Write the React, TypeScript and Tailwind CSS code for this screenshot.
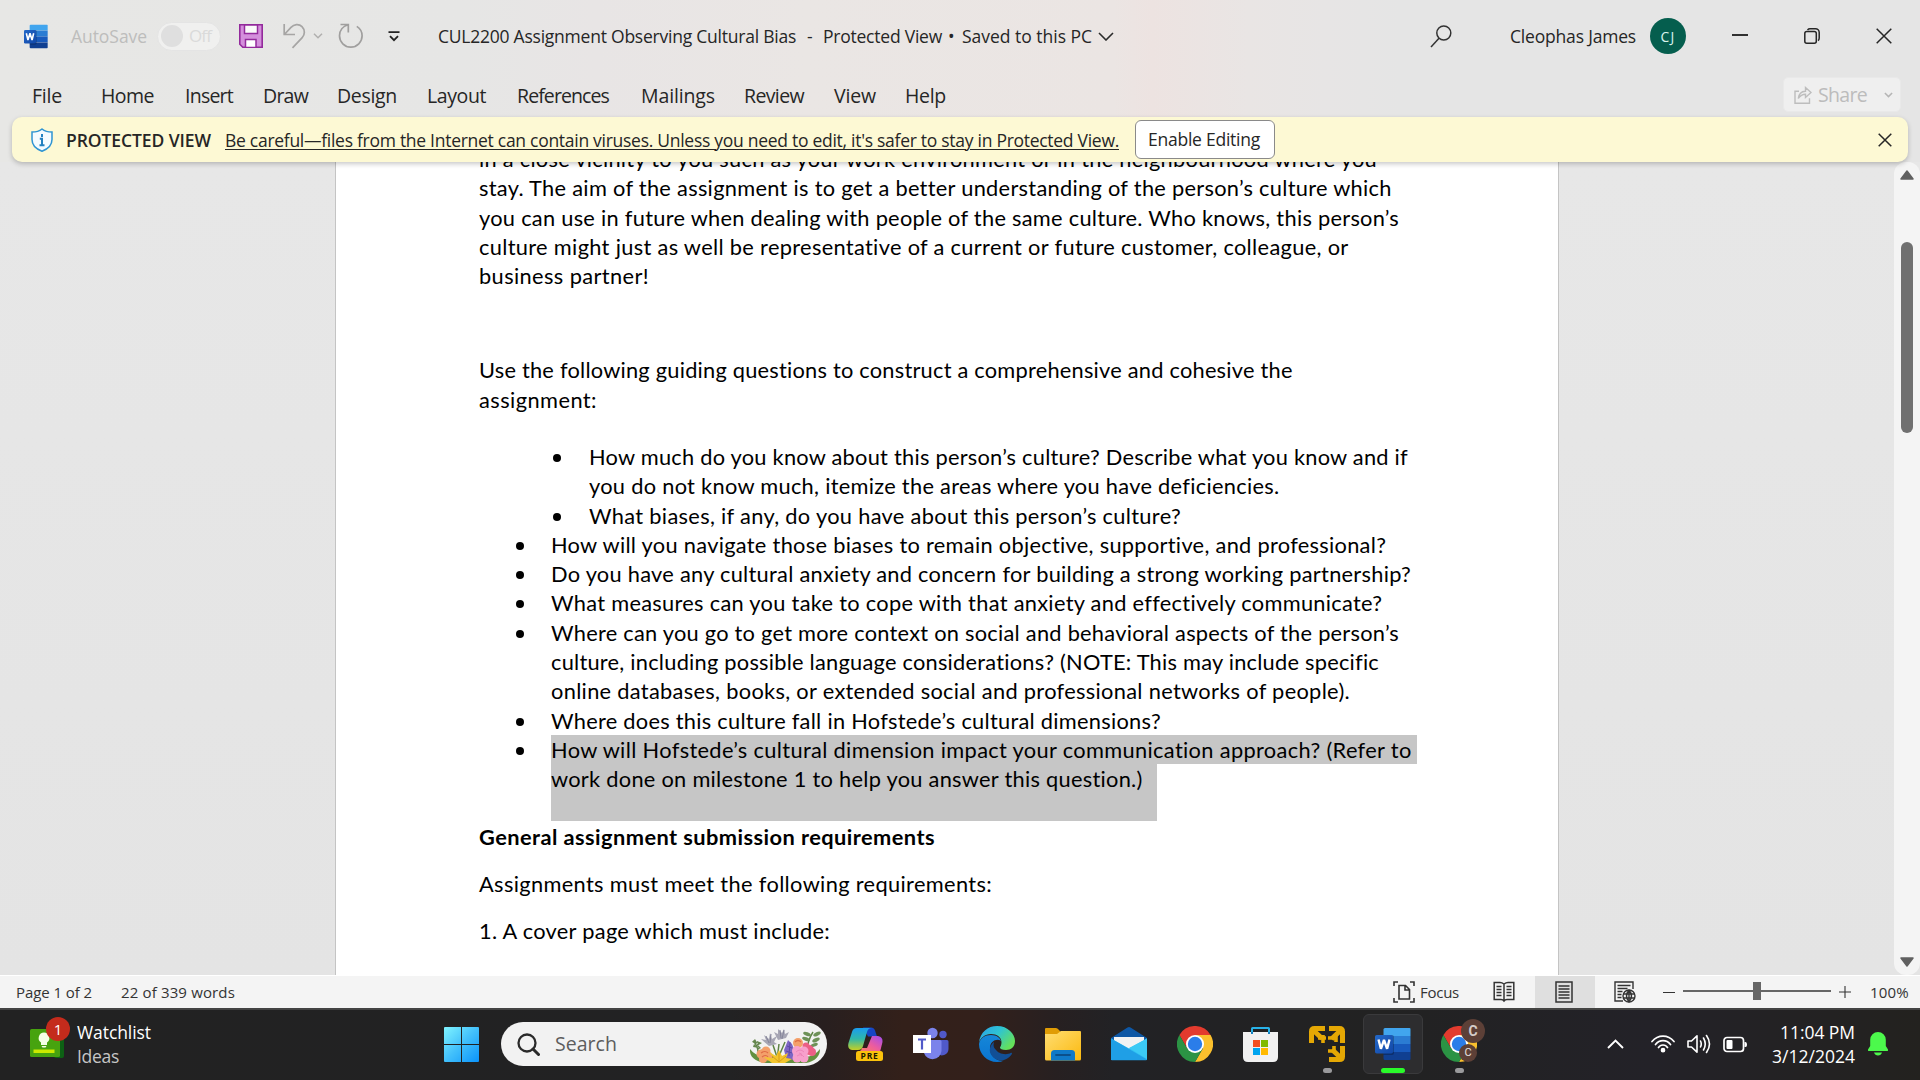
import { useLayoutEffect, useRef, useState } from "react";

/* A single line of text, tracked so that it fills exactly the given width. */
function Fit({ w, className = "", children }: { w: number; className?: string; children: string }) {
  const ref = useRef<HTMLSpanElement>(null);
  const [gap, setGap] = useState(0);
  useLayoutEffect(() => {
    if (ref.current) {
      const natural = ref.current.getBoundingClientRect().width;
      setGap((g) => g + (w - natural) / children.length);
    }
  }, [w, children]);
  return (
    <span className={"block shrink-0 whitespace-pre " + className} style={{ width: w }}>
      <span ref={ref} style={{ letterSpacing: gap }}>
        {children}
      </span>
    </span>
  );
}

function WordIcon({ className }: { className: string }) {
  return (
    <svg viewBox="0 0 36 34" preserveAspectRatio="none" className={className}>
      <defs>
        <linearGradient id="wd" x1="0" y1="0" x2="1" y2="1">
          <stop offset="0" stopColor="#2368c8" />
          <stop offset="1" stopColor="#1248a8" />
        </linearGradient>
      </defs>
      <path d="M10 1h24.500a1 1 0 0 1 1 1v7H8.500V2.500A1.500 1.500 0 0 1 10 1z" fill="#41a5ee" />
      <path d="M8.500 9h27v8h-27z" fill="#2b7cd3" />
      <path d="M8.500 17h27v8h-27z" fill="#185abd" />
      <path d="M8.500 25h27v7a1 1 0 0 1-1 1H10a1.500 1.500 0 0 1-1.500-1.500z" fill="#103f91" />
      <path d="M8.500 8h8.500a2 2 0 0 1 2 2v16a2 2 0 0 1-2 2H8.500z" fill="#000" opacity=".25" />
      <rect x="0" y="8" width="18" height="18.500" rx="1.800" fill="url(#wd)" />
      <path d="M3.500 12.500l2.400 9.300 3.100-9 3.100 9 2.400-9.300" fill="none" stroke="#fff" strokeWidth="2.400" strokeLinejoin="bevel" />
    </svg>
  );
}

function Chrome({ className }: { className: string }) {
  return (
    <svg viewBox="-18 -18 36 36" className={className}>
      <path d="M-15.600-9A18 18 0 0 1 15.600-9H0L-7.800 4.500z" fill="#e33b2e" />
      <path d="M15.600-9A18 18 0 0 1 0 18L7.800 4.500 0-9z" fill="#fbc02d" />
      <path d="M0 18A18 18 0 0 1-15.600-9L-7.800 4.500H7.800z" fill="#2b9344" />
      <circle r="9" fill="#fff" />
      <circle r="7.200" fill="#2b7de9" />
    </svg>
  );
}

const tabs: [string, number, string][] = [
  ["File", 30, "ml-[32px]"],
  ["Home", 53, "ml-[39px]"],
  ["Insert", 48, "ml-[31px]"],
  ["Draw", 45, "ml-[30px]"],
  ["Design", 60, "ml-[29px]"],
  ["Layout", 59, "ml-[30px]"],
  ["References", 92, "ml-[31px]"],
  ["Mailings", 74, "ml-[32px]"],
  ["Review", 60, "ml-[29px]"],
  ["View", 42, "ml-[30px]"],
  ["Help", 41, "ml-[29px]"],
];

function TitleBar() {
  return (
    <div className="flex h-[72px] items-center text-[17.500px] text-[#262626]">
      <WordIcon className="ml-[24px] h-[25px] w-[24px] shrink-0" />
      <Fit w={76} className="ml-[23px] text-[#bdbdbc]">AutoSave</Fit>
      <div className="ml-[10px] flex h-[29px] w-[64px] shrink-0 items-center rounded-full border border-[#e4e4e4] bg-[#f0f0ef] pl-[3px] text-[#dadada]">
        <div className="h-[22px] w-[22px] rounded-full bg-[#dfdfdf]" />
        <Fit w={22} className="ml-[6px] text-[17px]">Off</Fit>
      </div>
      <svg viewBox="0 0 24 24" className="ml-[18px] h-[24px] w-[24px] shrink-0">
        <path d="M.8.8h22.400v22.400H3.800l-3-3z" fill="#d48fdc" stroke="#932a9c" strokeWidth="1.600" />
        <rect x="5.500" y="1" width="13" height="8.500" fill="#fafafa" stroke="#932a9c" strokeWidth="1.500" />
        <rect x="6.500" y="15.500" width="10.500" height="8" fill="#fff" stroke="#932a9c" strokeWidth="1.500" />
      </svg>
      <svg viewBox="0 0 24 26" className="ml-[20px] h-[26px] w-[24px] shrink-0" fill="none" stroke="#a6a5a4" strokeWidth="1.700">
        <path d="M1.200 1v10.500H12M1.800 11L8 4.300C11 1 16 .5 19 3.600c3.200 3.300 3 8 .2 11L9.500 24.800" />
      </svg>
      <svg viewBox="0 0 10 6" className="ml-[6px] h-[6px] w-[10px] shrink-0" fill="none" stroke="#b0afae" strokeWidth="1.500">
        <path d="M1 .8l4 4 4-4" />
      </svg>
      <svg viewBox="0 0 26 26" className="ml-[15px] h-[26px] w-[26px] shrink-0" fill="none" stroke="#a09f9e" strokeWidth="1.700">
        <path d="M2.500 1.500h7.800v8M10 1.800C5 3.300 1.500 7.500 1.500 12.800a11.300 11.300 0 0 0 22.600 0c0-4-2-7.300-5.300-9.400" />
      </svg>
      <svg viewBox="0 0 12 11" className="ml-[24px] h-[11px] w-[12px] shrink-0" fill="none" stroke="#222" strokeWidth="1.800">
        <path d="M.5 1.200h11M2 5.200l4 4 4-4" />
      </svg>
      <Fit w={358} className="ml-[38px]">CUL2200 Assignment Observing Cultural Bias</Fit>
      <Fit w={6} className="ml-[11px]">-</Fit>
      <Fit w={119} className="ml-[10px]">Protected View</Fit>
      <Fit w={8} className="ml-[6px]">•</Fit>
      <Fit w={130} className="ml-[6px]">Saved to this PC</Fit>
      <svg viewBox="0 0 16 9" className="ml-[6px] h-[9px] w-[16px] shrink-0" fill="none" stroke="#2b2b2b" strokeWidth="1.600">
        <path d="M1 1l7 7 7-7" />
      </svg>
      <svg viewBox="0 0 22 23" className="ml-[316px] h-[23px] w-[22px] shrink-0" fill="none" stroke="#333" strokeWidth="1.500">
        <circle cx="13.800" cy="8" r="7" />
        <path d="M9 13.200L1 22" />
      </svg>
      <Fit w={126} className="ml-[58px]">Cleophas James</Fit>
      <div className="ml-[14px] flex h-[36px] w-[36px] shrink-0 items-center justify-center rounded-full bg-[#055e4e] text-[14px] text-[#d9f3ee]">
        <Fit w={15}>CJ</Fit>
      </div>
      <div className="ml-[46px] h-[2px] w-[16px] shrink-0 -translate-y-[1px] bg-[#303030]" />
      <svg viewBox="0 0 16 16" className="ml-[56px] h-[16px] w-[16px] shrink-0" fill="none" stroke="#262626" strokeWidth="1.500">
        <rect x=".8" y="3.500" width="11.500" height="11.700" rx="2" />
        <path d="M3.500 1.900Q4.500.8 6 .8h5.500a3.700 3.700 0 0 1 3.700 3.700V10q0 1.800-1.200 2.600" />
      </svg>
      <svg viewBox="0 0 16 16" className="ml-[56px] h-[16px] w-[16px] shrink-0" stroke="#262626" strokeWidth="1.500">
        <path d="M.7.7l14.600 14.600M15.300.7L.7 15.300" />
      </svg>
    </div>
  );
}

function Menu() {
  return (
    <div className="flex h-[45px] items-center text-[19.500px] text-[#262626]">
      {tabs.map(([t, w, m]) => (
        <Fit key={t} w={w} className={"pt-[2px] " + m}>{t}</Fit>
      ))}
      <div className="mr-[19px] ml-auto flex h-[35px] w-[118px] items-center rounded-[5px] border border-[#e9e9e9] bg-[#efefef] text-[#bcbcbc]">
        <svg viewBox="0 0 18 18" className="ml-[10px] h-[18px] w-[18px]" fill="none" stroke="#bdbdbd" strokeWidth="1.400">
          <path d="M5 5.200H1v12h14.500v-5M4.300 12.500C4.800 8 7.500 5.500 11.500 5.300V1.500l5.500 5-5.500 5V8.200c-3.300 0-5.300 1.300-7.200 4.300z" />
        </svg>
        <Fit w={49} className="ml-[6px]">Share</Fit>
        <svg viewBox="0 0 10 6" className="ml-[17px] h-[6px] w-[9px]" fill="none" stroke="#b5b5b5" strokeWidth="1.700">
          <path d="M1 .8l4 4 4-4" />
        </svg>
      </div>
    </div>
  );
}

function Banner() {
  return (
    <div className="relative z-10 mx-[12px] flex h-[45px] items-center rounded-[10px] bg-[#fdf9d4] text-[17.500px] text-[#262626] shadow-[0_2px_5px_rgba(0,0,0,0.22)]">
      <svg viewBox="0 0 22 24" className="ml-[19px] h-[24px] w-[22px] shrink-0">
        <path d="M11 1C8.500 3 5 4 1 4v7.500C1 17.500 5 21 11 23.200c6-2.200 10-5.700 10-11.700V4c-4 0-7.500-1-10-3z" fill="#f4fbff" stroke="#2e94d2" strokeWidth="1.500" />
        <path d="M11 6v3M8.800 10.800H11V17M8.500 17.200h5" stroke="#2381c0" strokeWidth="2" fill="none" />
      </svg>
      <Fit w={145} className="ml-[13px] pt-[1px] font-semibold">PROTECTED VIEW</Fit>
      <Fit w={894} className="ml-[14px] pt-[1px] underline decoration-1 underline-offset-[2px]">
        {"Be careful—files from the Internet can contain viruses. Unless you need to edit, it's safer to stay in Protected View."}
      </Fit>
      <div className="ml-[16px] flex h-[39px] w-[140px] shrink-0 items-center justify-center rounded-[6px] border border-[#8a8a8a] bg-white">
        <Fit w={112} className="mr-[2px]">Enable Editing</Fit>
      </div>
      <svg viewBox="0 0 14 14" className="mr-[16px] ml-auto h-[14px] w-[14px]" stroke="#262626" strokeWidth="1.500">
        <path d="M.7.7l12.600 12.600M13.300.7L.7 13.300" />
      </svg>
    </div>
  );
}

function Item({ lines, deep = false }: { lines: [string, number][]; deep?: boolean }) {
  return (
    <li className={"flex items-start " + (deep ? "pl-[74px]" : "pl-[37px]")}>
      <span className={"mt-[12px] h-[8px] w-[8px] shrink-0 rounded-full bg-black " + (deep ? "mr-[28px]" : "mr-[27px]")} />
      <div>
        {lines.map(([t, w]) => (
          <Fit key={t} w={w}>{t}</Fit>
        ))}
      </div>
    </li>
  );
}

function Page() {
  return (
    <div className="ml-[335px] h-full w-[1224px] border-x border-[#c4c4c4] bg-white pl-[143px] font-['Lato','Carlito',sans-serif] text-[21.800px] leading-[29.400px] text-black">
      <div className="-mt-[18px] leading-[29.300px]">
        <Fit w={898}>in a close vicinity to you such as your work environment or in the neighbourhood where you</Fit>
        <Fit w={912}>stay. The aim of the assignment is to get a better understanding of the person’s culture which</Fit>
        <Fit w={920}>you can use in future when dealing with people of the same culture. Who knows, this person’s</Fit>
        <Fit w={870}>culture might just as well be representative of a current or future customer, colleague, or</Fit>
        <Fit w={170}>business partner!</Fit>
      </div>
      <div className="mt-[64.500px] leading-[30px]">
        <Fit w={814}>Use the following guiding questions to construct a comprehensive and cohesive the</Fit>
        <Fit w={118}>assignment:</Fit>
      </div>
      <ul className="mt-[27px] leading-[29.300px]">
        <Item deep lines={[["How much do you know about this person’s culture? Describe what you know and if", 819], ["you do not know much, itemize the areas where you have deficiencies.", 690]]} />
        <Item deep lines={[["What biases, if any, do you have about this person’s culture?", 592]]} />
        <Item lines={[["How will you navigate those biases to remain objective, supportive, and professional?", 836]]} />
        <Item lines={[["Do you have any cultural anxiety and concern for building a strong working partnership?", 860]]} />
        <Item lines={[["What measures can you take to cope with that anxiety and effectively communicate?", 831]]} />
        <Item lines={[["Where can you go to get more context on social and behavioral aspects of the person’s", 848], ["culture, including possible language considerations? (NOTE: This may include specific", 828], ["online databases, books, or extended social and professional networks of people).", 799]]} />
        <Item lines={[["Where does this culture fall in Hofstede’s cultural dimensions?", 610]]} />
        <li className="flex items-start pl-[37px]">
          <span className="mt-[12px] mr-[27px] h-[8px] w-[8px] shrink-0 rounded-full bg-black" />
          <div className="flex flex-col items-start">
            <div className="w-[866px] bg-[#c6c6c6]">
              <Fit w={861}>How will Hofstede’s cultural dimension impact your communication approach? (Refer to</Fit>
            </div>
            <div className="h-[57px] w-[606px] bg-[#c6c6c6]">
              <Fit w={592}>work done on milestone 1 to help you answer this question.)</Fit>
            </div>
          </div>
        </li>
      </ul>
      <Fit w={456} className="mt-[1px] font-bold">General assignment submission requirements</Fit>
      <Fit w={513} className="mt-[17px]">Assignments must meet the following requirements:</Fit>
      <Fit w={351} className="mt-[18px]">1. A cover page which must include:</Fit>
    </div>
  );
}

function ScrollBar() {
  return (
    <div className="ml-auto flex h-full w-[26px] flex-col items-center rounded-t-[12px] rounded-b-[12px] bg-[#f4f4f4]">
      <svg viewBox="0 0 14 10" className="mt-[8px] h-[10px] w-[14px] shrink-0">
        <path d="M7 1l6 8H1z" fill="#606060" stroke="#606060" strokeWidth="1.500" strokeLinejoin="round" />
      </svg>
      <div className="mt-[62px] h-[191px] w-[12px] rounded-full bg-[#707070]" />
      <svg viewBox="0 0 14 10" className="mt-auto mb-[8px] h-[10px] w-[14px] shrink-0">
        <path d="M7 9l6-8H1z" fill="#606060" stroke="#606060" strokeWidth="1.500" strokeLinejoin="round" />
      </svg>
    </div>
  );
}

function StatusBar() {
  return (
    <div className="flex h-[33px] shrink-0 items-center border-t border-white bg-[#f4f4f4] text-[15px] text-[#333]">
      <Fit w={76} className="ml-[16px]">Page 1 of 2</Fit>
      <Fit w={114} className="ml-[29px]">22 of 339 words</Fit>
      <svg viewBox="0 0 22 22" className="ml-[1158px] h-[22px] w-[22px] shrink-0" fill="none" stroke="#333" strokeWidth="1.600">
        <path d="M5 1H1v4M17 1h4v4M5 21H1v-4M17 21h4v-4" />
        <path d="M6 4.500h6.500l4 4V18H6zM12 4.500V9h4.500" />
      </svg>
      <Fit w={39} className="ml-[5px]">Focus</Fit>
      <svg viewBox="0 0 22 22" className="ml-[34px] h-[22px] w-[22px] shrink-0" fill="none" stroke="#333" strokeWidth="1.500">
        <path d="M11 3Q9 1.500 7 1.500H1.200v17H8Q10 18.500 11 20 12 18.500 14 18.500h6.800v-17H15Q13 1.500 11 3zM11 3v16.500" />
        <path d="M3.500 5.500h5M3.500 8.500h5M3.500 11.500h5M3.500 14.500h5M13.500 5.500h5M13.500 8.500h5M13.500 11.500h5M13.500 14.500h5" />
      </svg>
      <div className="ml-[20px] flex h-full w-[60px] shrink-0 items-center justify-center bg-[#dfdfdf] pr-[2px]">
        <svg viewBox="0 0 18 22" className="h-[22px] w-[18px]" fill="none" stroke="#333" strokeWidth="1.500">
          <path d="M1 1h16v20H1zM3.500 5h11M3.500 8h11M3.500 11h11M3.500 14h11M3.500 17h11" />
        </svg>
      </div>
      <svg viewBox="0 0 22 22" className="ml-[19px] h-[22px] w-[22px] shrink-0" fill="none" stroke="#333" strokeWidth="1.400">
        <path d="M9 20H1V1h18v7M3.500 4.500h13M3.500 7.500h10M3.500 10.500h5M3.500 13.500h4M3.500 16.500h4" />
        <circle cx="15" cy="15" r="6" />
        <path d="M9 13h12M9 17h12M15 9v12M15 9q-5 6 0 12M15 9q5 6 0 12" />
      </svg>
      <div className="ml-[27px] h-[1px] w-[12px] shrink-0 bg-[#333]" />
      <div className="ml-[8px] flex h-[18px] w-[148px] shrink-0 -translate-y-[1px] items-center">
        <div className="h-[2px] w-[70px] bg-[#666]" />
        <div className="h-[18px] w-[8px] bg-[#666]" />
        <div className="h-[2px] w-[70px] bg-[#666]" />
      </div>
      <svg viewBox="0 0 12 12" className="ml-[8px] h-[12px] w-[12px] shrink-0" stroke="#333" strokeWidth="1.100">
        <path d="M0 6h12M6 0v12" />
      </svg>
      <Fit w={39} className="ml-[19px]">100%</Fit>
    </div>
  );
}

function Flowers() {
  return (
    <svg viewBox="0 0 72 36" className="h-[36px] w-[72px] shrink-0">
      <path d="M1 21q-1 11 14 14h42q14-3 14-14-5 7-15 8H17Q6 28 1 21z" fill="#64903f" />
      <path d="M9 29Q10 18 4 13M12 22L28 33M30 16l-2 16M24 17l4 12M58 25Q58 13 64 4M36 14l-6 14" stroke="#5d8344" strokeWidth="1.500" fill="none" />
      <path d="M3 14l6 2-3-5zM4 19l6 1-5-4zM13 15l-5 3 0-5zM12 20l-4 2 1-5z" fill="#66874e" />
      <g fill="#6d9157">
        <ellipse cx="58" cy="6" rx="4" ry="1.800" transform="rotate(20 58 6)" /><ellipse cx="68" cy="6" rx="4" ry="1.800" transform="rotate(-25 68 6)" />
        <ellipse cx="57" cy="11" rx="4" ry="1.800" transform="rotate(20 57 11)" /><ellipse cx="67" cy="12" rx="4" ry="1.800" transform="rotate(-25 67 12)" />
        <ellipse cx="65" cy="17" rx="4" ry="1.600" transform="rotate(-20 65 17)" />
      </g>
      <path d="M12 11l5 1-2-5 5 4 1-6 2 6 5-3-3 6 3 2-8 2zM25 4l4 2 0-5 4 4 2-4 1 5 4-2-3 6-8 2z" fill="#a7a6b4" />
      <path d="M17 8l3 7M22 6l-1 9M31 2l1 8M35 2l-2 9" stroke="#85859a" strokeWidth="1" />
      <g fill="#f4a06a"><circle cx="12" cy="26" r="4.500" /><circle cx="17" cy="23" r="4.500" /><circle cx="19" cy="28" r="4.500" /><circle cx="14" cy="31" r="4" /><circle cx="49" cy="15" r="5" /></g>
      <path d="M12 25q4-3 7 0M13 29q4-3 6 0M46 14q3-3 6 0" stroke="#df6d45" fill="none" strokeWidth="1.200" />
      <path d="M39 12l4 4 2 5-1 11-7-2-2-8z" fill="#7d65c4" />
      <path d="M38 18l5 2M37 23l6 2M41 14l-1 14" stroke="#5d4aa6" strokeWidth="1" />
      <g fill="#ec5f86"><circle cx="60" cy="22" r="5" /><circle cx="63" cy="24" r="4" /><circle cx="57" cy="18" r="3.500" /></g>
      <g fill="#f7a0cc"><circle cx="48" cy="23" r="5" /><circle cx="55" cy="23" r="4.500" /><circle cx="48" cy="30" r="4.500" /><circle cx="55" cy="30" r="4.500" /><circle cx="51" cy="26" r="6" /></g>
      <path d="M47 24q4-4 8 0M48 28q4-3 7 1M50 25q3 0 3 3" stroke="#ee86ba" fill="none" strokeWidth="1" />
      <path d="M15 29l9 1-4-6 7 4 3-6 3 6 6-3-2 5 6 1-7 4H23z" fill="#f3c52e" />
      <path d="M30 34l-7-6M30 34v-9M30 34l7-6" stroke="#d69d18" strokeWidth="1" />
    </svg>
  );
}

function TaskBar() {
  return (
    <div className="flex h-[72px] shrink-0 items-center border-t-2 border-[#444443] bg-[linear-gradient(90deg,#222222_0%,#222223_38%,#281f1f_43%,#33201a_47%,#33201b_51%,#272021_55%,#222225_58%,#222222_72%,#232228_86%,#23221f_100%)] pb-[2px] text-[17.500px] text-white">
      <div className="relative ml-[30px] h-[40px] w-[40px] shrink-0 -translate-y-[1px]">
        <svg viewBox="0 0 40 40" className="h-[40px] w-[40px]">
          <rect x="24" y="8" width="10" height="27" rx="2" fill="#0d6114" />
          <rect x="0" y="6" width="30" height="28" rx="1.500" fill="#47a30f" />
          <path d="M14 9.500a5.500 5.500 0 0 1 3 10V22h-6v-2.500a5.500 5.500 0 0 1 3-10zM11.500 23h5l-1 1.500h-3z" fill="#f4ffe6" />
          <rect x="3.500" y="26.500" width="21" height="3.500" fill="#cbea00" />
        </svg>
        <div className="absolute -top-[6px] left-[16px] flex h-[24px] w-[24px] items-center justify-center rounded-full bg-[#c42b1c] text-[15px]">1</div>
      </div>
      <div className="ml-[7px] leading-[24px]">
        <Fit w={74}>Watchlist</Fit>
        <Fit w={42} className="text-[#c6c6c6]">Ideas</Fit>
      </div>
      <svg viewBox="0 0 35 35" className="ml-[293px] h-[35px] w-[35px] shrink-0">
        <defs>
          <linearGradient id="win" x1="0" y1="0" x2="35" y2="35" gradientUnits="userSpaceOnUse">
            <stop offset="0" stopColor="#80f4ff" />
            <stop offset=".5" stopColor="#42c0fb" />
            <stop offset="1" stopColor="#0a93fb" />
          </linearGradient>
        </defs>
        <path d="M1 0h16v17H0V1a1 1 0 0 1 1-1zM18 0h16a1 1 0 0 1 1 1v16H18zM0 18h17v17H1a1 1 0 0 1-1-1zM18 18h17v16a1 1 0 0 1-1 1H18z" fill="url(#win)" />
      </svg>
      <div className="ml-[22px] flex h-[44px] w-[326px] shrink-0 items-center rounded-full bg-[#f2f2f2]">
        <svg viewBox="0 0 23 23" className="ml-[16px] h-[23px] w-[23px]" fill="none" stroke="#2a2a2a" strokeWidth="2.300">
          <circle cx="10" cy="10" r="8.500" />
          <path d="M16 16l5.500 5.500" strokeWidth="3" strokeLinecap="round" />
        </svg>
        <Fit w={62} className="ml-[15px] text-[19.500px] text-[#5d5d5d]">Search</Fit>
        <div className="mr-[6px] ml-auto pt-[4px]"><Flowers /></div>
      </div>

      {/* Copilot */}
      <svg viewBox="0 0 36 36" className="ml-[21px] h-[36px] w-[36px] shrink-0">
        <defs>
          <linearGradient id="cp1" x1="0" y1="0" x2="0" y2="1">
            <stop offset="0" stopColor="#1a9cf0" /><stop offset=".5" stopColor="#30b8a8" /><stop offset="1" stopColor="#c5cf24" />
          </linearGradient>
          <linearGradient id="cp2" x1="1" y1="0" x2="0" y2="1">
            <stop offset="0" stopColor="#a04cf0" /><stop offset=".5" stopColor="#ee5d9c" /><stop offset="1" stopColor="#fb8a55" />
          </linearGradient>
        </defs>
        <path d="M15 1.500h8q3 0 4 3l2 6h-7l-2 0z" fill="#1745c4" />
        <path d="M9 2h15q-4 0-5 4l-4 14q-1 4-5 4H4q-5-1-3.500-7L4 6q1-4 5-4z" fill="url(#cp1)" />
        <path d="M24 10h6q5 1 4.500 6L32 26H8q5 0 6-4h5z" fill="url(#cp2)" />
        <rect x="8" y="25" width="27" height="10" rx="2.500" fill="#fbc20c" />
        <text x="21.500" y="33" textAnchor="middle" fontSize="8.500" fontWeight="700" letterSpacing=".7" fontFamily="Open Sans, sans-serif" fill="#231a00">PRE</text>
      </svg>

      {/* Teams */}
      <svg viewBox="0 0 36 36" className="ml-[29px] h-[36px] w-[36px] shrink-0">
        <circle cx="30" cy="8.500" r="3.700" fill="#5059c9" />
        <circle cx="19.500" cy="7" r="5.200" fill="#7b83eb" />
        <path d="M24 14h10q1.500 0 1.500 1.500V23a6.500 6.500 0 0 1-11.500 4z" fill="#5059c9" />
        <path d="M11 14h16q1.500 0 1.500 1.500V25a9 9 0 0 1-17.500 2z" fill="#7b83eb" />
        <rect x="0" y="9" width="18" height="18" fill="#fff" />
        <path d="M5 13.500h8M9 13.500v10" stroke="#5059c9" strokeWidth="2.200" />
      </svg>

      {/* Edge */}
      <svg viewBox="0 0 36 36" className="ml-[30px] h-[36px] w-[36px] shrink-0">
        <defs>
          <linearGradient id="ed1" x1="0" y1="0" x2="1" y2=".6">
            <stop offset="0" stopColor="#2b9fe8" /><stop offset=".5" stopColor="#2ec3d4" /><stop offset="1" stopColor="#65e05a" />
          </linearGradient>
          <linearGradient id="ed2" x1="0" y1="0" x2="0" y2="1">
            <stop offset="0" stopColor="#1687d8" /><stop offset="1" stopColor="#0a74d0" />
          </linearGradient>
        </defs>
        <path d="M0 17C1 6 9 0 18 0c11 0 18 8 18 15 0 6-4 9-9 9-4 0-6-1-6-2.500 0-1 1.500-2 1.500-5C22.500 11 18 8 12 8 6 8 1 12 0 17z" fill="url(#ed1)" />
        <path d="M0 18C1 12 6 9 12 9c6 0 9 3 10 6-4-3-11 0-11 7 0 8 7 14 14 12.500Q22 36 18 36C8 36 0 28 0 18z" fill="url(#ed2)" />
        <path d="M15 16c-4 3-6 9-2 14 4 5 11 6 16 2 2-1.500 3.500-3 4-4.500 0-1-.5-1-1-.7-5 3-13 1-15.500-3.500-1.500-2.500-1.700-5-1.500-7.300z" fill="#124f96" />
        <path d="M14.500 19c0-3 3-5 6-4 1.500 1 2 3 1 5-1 1.500-1 2.500 0 3.500l-2 1c-3-.5-5-2.500-5-5.500z" fill="#2b201f" />
      </svg>

      {/* File Explorer */}
      <svg viewBox="0 0 36 36" className="ml-[30px] h-[36px] w-[36px] shrink-0">
        <defs>
          <linearGradient id="fd" x1="0" y1="0" x2="1" y2="1"><stop offset="0" stopColor="#ffdd72" /><stop offset="1" stopColor="#fbb90f" /></linearGradient>
        </defs>
        <path d="M0 9V3q0-1 1-1h10q1.500 0 2.500 1.500L16 6v5H0z" fill="#e09c05" />
        <path d="M0 8h12l4-3h19q1 0 1 1v27q0 1.500-1.500 1.500h-33Q0 34.500 0 33z" fill="url(#fd)" />
        <path d="M6 34.500v-7q0-3.500 3.500-3.500h17q3.500 0 3.500 3.500v7z" fill="#0f79c8" />
        <path d="M11 29h14" stroke="#0b4f8b" strokeWidth="1.800" strokeLinecap="round" />
      </svg>

      {/* Mail */}
      <svg viewBox="0 0 36 36" className="ml-[30px] h-[36px] w-[36px] shrink-0">
        <path d="M0 12L16.500 1.500q1.500-1 3 0L36 12v5H0z" fill="#0d57a5" />
        <path d="M3 11h30v8L18 26 3 19z" fill="#f1f2f3" />
        <path d="M0 12.500L18 22.500 36 12.500V34H0z" fill="#2fbff2" />
        <path d="M18 22L36 12.500V33z" fill="#3bcaf5" />
        <path d="M0 12.500L36 33.500q0 .7-1 .7H1q-1 0-1-1z" fill="#1f9fe6" />
      </svg>

      <Chrome className="ml-[30px] h-[36px] w-[36px] shrink-0" />

      {/* Microsoft Store */}
      <svg viewBox="0 0 36 36" className="ml-[30px] h-[36px] w-[36px] shrink-0">
        <path d="M9 8V2.500Q9 2 9.500 2h16q.5 0 .5.500V8" fill="none" stroke="#28b2e8" strokeWidth="2" />
        <path d="M0 6h35v25q0 5-5 5H5q-5 0-5-5z" fill="#f1f1f1" />
        <path d="M9 6v2M26 6v2" stroke="#1580c0" strokeWidth="2" />
        <path d="M10 14h7v7h-7z" fill="#f25022" /><path d="M18 14h7v7h-7z" fill="#7fba00" />
        <path d="M10 22h7v7h-7z" fill="#00a4ef" /><path d="M18 22h7v7h-7z" fill="#ffb900" />
      </svg>

      {/* VMware */}
      <div className="-mb-[2px] ml-[30px] flex h-[70px] w-[36px] shrink-0 flex-col items-center">
        <svg viewBox="0 0 36 36" className="mt-[16px] h-[36px] w-[36px]" fill="none" stroke="#e5a804" strokeWidth="5">
          <path d="M16 2.500H5.500q-3 0-3 3V17M3 3l10 9.500M20 2.500h10.500q3 0 3 3V17M33 3l-10.500 10M33.500 20v10.500q0 3-3 3H20M33 33l-10-9.500" />
          <path d="M9 12h8M19 12h8M27 8v8M14 9v8M19 25h7M25 20v7" strokeWidth="3.600" />
        </svg>
        <div className="mt-[6px] h-[5px] w-[9px] rounded-full bg-[#9a9a9c]" />
      </div>

      <div className="ml-[18px] flex h-[60px] w-[60px] shrink-0 flex-col items-center rounded-[6px] border border-[#3a3a3c] bg-[#2d2d2f]">
        <WordIcon className="mt-[12px] h-[34px] w-[36px] shrink-0" />
        <div className="mt-[7px] h-[5px] w-[24px] shrink-0 rounded-full bg-[#2afb2a]" />
      </div>

      <div className="relative -mb-[2px] ml-[18px] flex h-[70px] w-[36px] shrink-0 flex-col items-center">
        <Chrome className="mt-[16px] h-[36px] w-[36px]" />
        <div className="mt-[6px] h-[5px] w-[9px] rounded-full bg-[#9a9a9c]" />
        <div className="absolute top-[9px] left-[20px] flex h-[24px] w-[24px] items-center justify-center rounded-full bg-[#5d4037] font-['Roboto',sans-serif] text-[14px] font-bold text-[#d5ccc9]">C</div>
        <div className="absolute top-[34px] left-[18px] flex h-[18px] w-[18px] items-center justify-center rounded-full bg-[#5d4037] font-['Roboto',sans-serif] text-[11px] text-[#e8e2e0]">C</div>
      </div>

      <svg viewBox="0 0 17 10" className="ml-[130px] h-[10px] w-[17px] shrink-0" fill="none" stroke="#fff" strokeWidth="1.900">
        <path d="M1 9l7.500-7.500L16 9" />
      </svg>
      <svg viewBox="0 0 24 18" className="ml-[27px] h-[18px] w-[24px] shrink-0" fill="none" stroke="#fff" strokeWidth="1.700" strokeLinecap="round">
        <path d="M1 6.500Q5.500 1.200 12 1.200T23 6.500M4.500 9.500Q7.500 5.700 12 5.700T19.500 9.500M7.500 12.500Q9 10 12 10t4.500 2.500" />
        <circle cx="12" cy="15.200" r="1.500" fill="#fff" />
      </svg>
      <svg viewBox="0 0 24 20" className="ml-[12px] h-[20px] w-[24px] shrink-0" fill="none" stroke="#fff" strokeWidth="1.600" strokeLinejoin="round" strokeLinecap="round">
        <path d="M1 7h3.500L10 1.800v16.400L4.500 13H1zM13.500 7q1.500 3 0 6M16.500 4q3.500 6 0 12M19.500 1.500q6 8.500 0 17" />
      </svg>
      <svg viewBox="0 0 24 16" className="ml-[12px] h-[17px] w-[24px] shrink-0">
        <rect x="1" y="1" width="19.500" height="14" rx="3" fill="none" stroke="#fff" strokeWidth="1.700" />
        <rect x="3.500" y="3.500" width="6" height="9" rx="1" fill="#fff" />
        <path d="M21.500 5.500h1q1.500 0 1.500 2.500t-1.500 2.500h-1z" fill="#fff" />
      </svg>
      <div className="ml-[25px] flex w-[83px] shrink-0 flex-col items-end leading-[24px]">
        <Fit w={75}>11:04 PM</Fit>
        <Fit w={83}>3/12/2024</Fit>
      </div>
      <svg viewBox="0 0 20 24" className="ml-[13px] h-[24px] w-[20px] shrink-0" fill="#4cf94c">
        <path d="M10 0a7.800 7.800 0 0 1 7.800 7.800v6.200L20 17.500q.3 1.500-1 1.500H1q-1.300 0-1-1.500L2.200 14V7.800A7.800 7.800 0 0 1 10 0zM6 20.500h8q-1 3-4 3t-4-3z" />
      </svg>
    </div>
  );
}

export default function App() {
  return (
    <div className="flex h-[1080px] w-[1920px] flex-col overflow-hidden bg-[#e6e6e6] font-['Open_Sans','Noto_Sans',sans-serif]">
      <div className="h-[162px] shrink-0 bg-[linear-gradient(90deg,#e7e7e5_0%,#e6e6e5_24%,#e8e5e5_31%,#eae6e4_42%,#ebe5e3_58%,#ede3e1_60%,#e9e5e4_65%,#e7e5e5_69%,#e5e5e5_73%,#e5e5e5_100%)]">
        <TitleBar />
        <Menu />
        <Banner />
      </div>
      <div className="flex h-[813px] shrink-0 overflow-hidden bg-[linear-gradient(180deg,#e7e7e7,#e4e4e4)]">
        <Page />
        <ScrollBar />
      </div>
      <StatusBar />
      <TaskBar />
    </div>
  );
}
